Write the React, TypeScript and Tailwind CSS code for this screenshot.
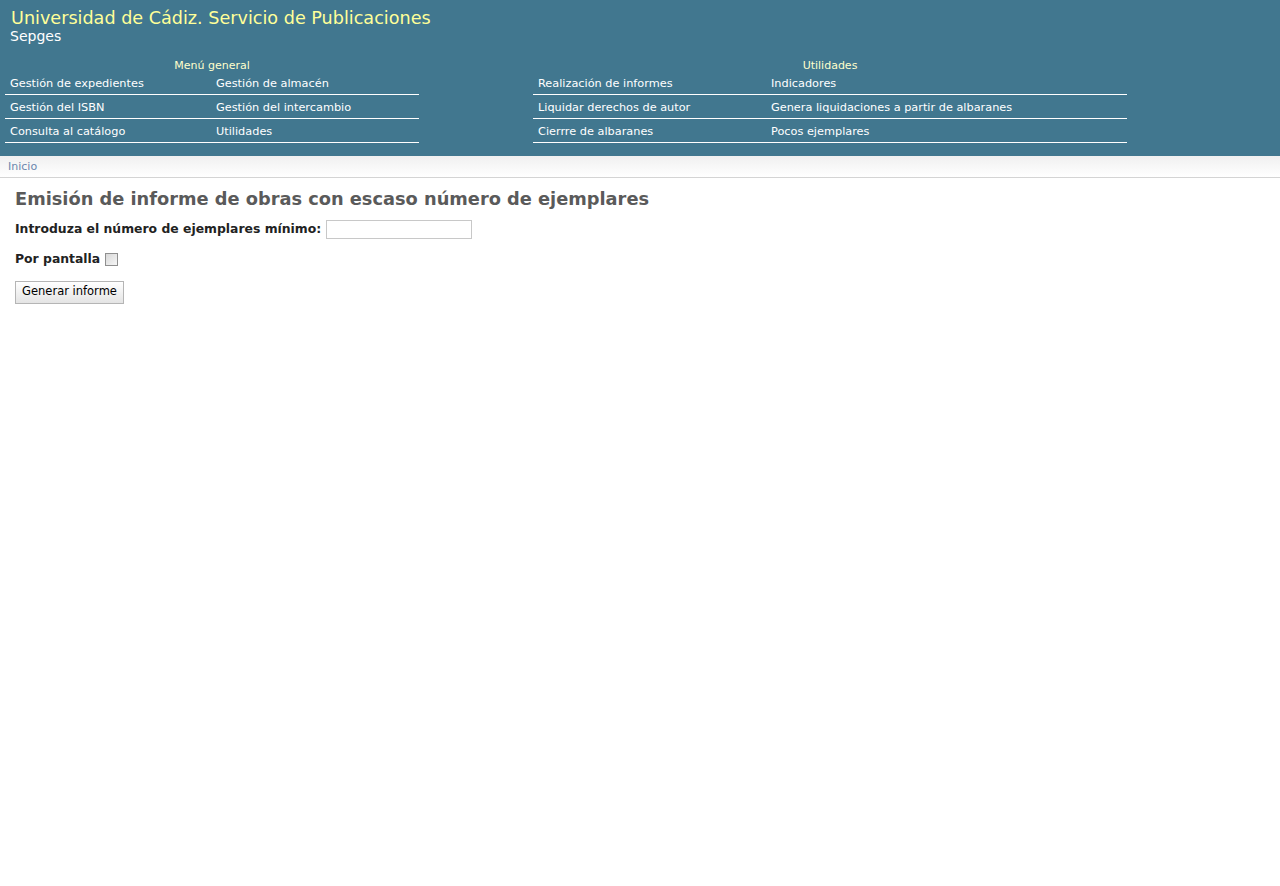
import React from 'react'

const left = [
  ['Gestión de expedientes', 'Gestión de almacén'],
  ['Gestión del ISBN', 'Gestión del intercambio'],
  ['Consulta al catálogo', 'Utilidades'],
]

const right = [
  ['Realización de informes', 'Indicadores'],
  ['Liquidar derechos de autor', 'Genera liquidaciones a partir de albaranes'],
  ['Cierrre de albaranes', 'Pocos ejemplares'],
]

function MenuTable({ title, rows, widths }: { title: string; rows: string[][]; widths: [string, string] }) {
  return (
    <div className="flex flex-col">
      <div className="h-[13px] text-center text-[11px] leading-[16px] text-[#ffffcc]">{title}</div>
      {rows.map((r, i) => (
        <div key={i} className="flex h-[24px] border-b border-white">
          <div className={`${widths[0]} pl-[5px] pt-[2px] text-[11.3px] leading-[21px] text-white`}>
            <a href="#">{r[0]}</a>
          </div>
          <div className={`${widths[1]} pl-[5px] pt-[2px] text-[11.3px] leading-[21px] text-white`}>
            <a href="#">{r[1]}</a>
          </div>
        </div>
      ))}
    </div>
  )
}

export default function App() {
  return (
    <div className="min-h-[886px] bg-white font-['DejaVu_Sans',Verdana,sans-serif]">
      {/* Cabecera */}
      <header className="bg-[#41778f] pt-[8px] pb-[13px]">
        <div className="pl-[11px] text-[17.6px] leading-[20px] text-[#ffff99]">
          Universidad de Cádiz. Servicio de Publicaciones
        </div>
        <div className="pl-[10px] text-[14px] leading-[17px] text-white">Sepges</div>
        <nav className="mt-[13px] flex gap-[114px] pl-[5px]">
          <MenuTable title="Menú general" rows={left} widths={['w-[206px]', 'w-[208px]']} />
          <MenuTable title="Utilidades" rows={right} widths={['w-[233px]', 'w-[361px]']} />
        </nav>
      </header>

      {/* Migas */}
      <div className="h-[22px] border-b border-[#d4d4d4] bg-gradient-to-b from-[#f0f0f0] to-white pl-[8px] text-[11px] leading-[22px] text-[#6a87ad]">
        <a href="#">Inicio</a>
      </div>

      {/* Contenido */}
      <main className="px-[15px] pt-[9px]">
        <h1 className="text-[17.8px] font-bold leading-[24px] text-[#5a5a5a]">
          Emisión de informe de obras con escaso número de ejemplares
        </h1>
        <form className="mt-[9px]">
          <div className="flex items-center text-[12.4px] font-bold text-[#222]">
            <label>Introduza el número de ejemplares mínimo:</label>
            <input type="text" className="ml-[5px] h-[19px] w-[146px] border border-[#c8c8c8] bg-white" />
          </div>
          <div className="mt-[11px] flex items-center text-[12.4px] font-bold text-[#222]">
            <label>Por pantalla</label>
            <input
              type="checkbox"
              className="ml-[5px] h-[13px] w-[13px] appearance-none border border-[#8f8f8f] bg-gradient-to-br from-[#d8d8d8] to-[#f6f6f6]"
            />
          </div>
          <button
            type="button"
            className="mt-[12px] h-[23px] w-[109px] border border-[#b5b5b5] bg-gradient-to-b from-white to-[#e4e4e4] text-[11.5px] text-black"
          >
            Generar informe
          </button>
        </form>
      </main>
    </div>
  )
}
